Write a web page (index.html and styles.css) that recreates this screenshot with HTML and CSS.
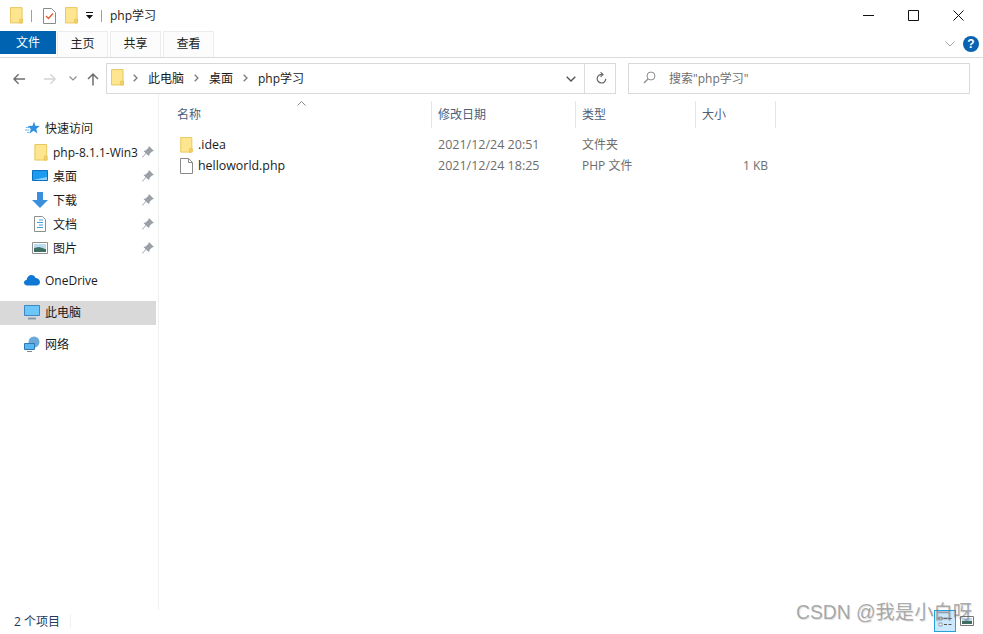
FILE: index.html
```html
<!DOCTYPE html>
<html>
<head>
    <meta charset="utf-8">
    <title>php学习</title>
    <link rel="stylesheet" href="styles.css">
</head>
<body>
    <svg class="defs" width="0" height="0">
        <symbol id="folder" viewBox="0 0 14 18">
            <path d="M.5.5h12.500v16.500H.5z" fill="#fde68f" stroke="#e8c355"/>
            <path d="M10.500 17v-4h3v4z" fill="#f6d365" stroke="#e8c355"/>
        </symbol>
        <symbol id="pin" viewBox="0 0 12 12">
            <path d="M7 0l5 5-2 .6-2.500 2.500-.4 2.100L4.200 7.800.6 11.500 0 11l3.700-3.800-2.200-2.300 2.100-.4L6.200 2z" fill="#9aa0a6"/>
        </symbol>
        <symbol id="crumb" viewBox="0 0 5 8">
            <path d="M.7.7L4 4 .7 7.300" fill="none" stroke="#7a7a7a" stroke-width="1.300"/>
        </symbol>
    </svg>

    <div class="window">
        <!-- title bar -->
        <div class="titlebar">
            <svg class="qa-folder"><use href="#folder"/></svg>
            <span class="qa-sep"></span>
            <svg class="qa-check" viewBox="0 0 13 16">
                <path d="M.5.5h8l4 4v11H.5z" fill="#fff" stroke="#8a8a8a"/>
                <path d="M3 8l2.500 2.500L10 5.500" fill="none" stroke="#e2572b" stroke-width="1.300"/>
            </svg>
            <svg class="qa-folder2"><use href="#folder"/></svg>
            <svg class="qa-drop" viewBox="0 0 8 7">
                <path d="M0 0h7v1H0zM0 3h7L3.500 7z" fill="#111"/>
            </svg>
            <span class="qa-sep sep2"></span>
            <span class="title">php学习</span>
            <div class="winbtns">
                <svg viewBox="0 0 11 11"><path d="M0 5.500h11" stroke="#111" fill="none"/></svg>
                <svg viewBox="0 0 11 11"><path d="M.5.500h10v10H.5z" stroke="#111" fill="none"/></svg>
                <svg viewBox="0 0 11 11"><path d="M.5.500l10 10M10.500.500l-10 10" stroke="#111" fill="none"/></svg>
            </div>
        </div>

        <!-- ribbon tabs -->
        <div class="ribbon">
            <div class="tab tab-file">文件</div>
            <div class="tab">主页</div>
            <div class="tab">共享</div>
            <div class="tab">查看</div>
            <div class="ribbon-right">
                <svg class="chev" viewBox="0 0 10 6"><path d="M.5.500L5 5 9.500.5" fill="none" stroke="#a8a8a8"/></svg>
                <div class="help">?</div>
            </div>
        </div>

        <!-- address row -->
        <div class="addrrow">
            <svg class="navarrow back" viewBox="0 0 14 12"><path d="M13 6H1.500M6 1L1 6l5 5" fill="none" stroke="#6d6d6d" stroke-width="1.500"/></svg>
            <svg class="navarrow fwd" viewBox="0 0 14 12"><path d="M1 6h11.500M8 1l5 5-5 5" fill="none" stroke="#d4d4d4" stroke-width="1.500"/></svg>
            <svg class="navdrop" viewBox="0 0 8 5"><path d="M.5.500L4 4 7.500.5" fill="none" stroke="#8f8f8f" stroke-width="1.200"/></svg>
            <svg class="navarrow up" viewBox="0 0 12 14"><path d="M6 13.500V2M1 7l5-5 5 5" fill="none" stroke="#6d6d6d" stroke-width="1.500"/></svg>
            <div class="addrbox">
                <svg class="addr-folder"><use href="#folder"/></svg>
                <svg class="crumb-arrow"><use href="#crumb"/></svg>
                <span class="crumb">此电脑</span>
                <svg class="crumb-arrow"><use href="#crumb"/></svg>
                <span class="crumb">桌面</span>
                <svg class="crumb-arrow"><use href="#crumb"/></svg>
                <span class="crumb">php学习</span>
                <svg class="addr-drop" viewBox="0 0 10 6"><path d="M.7.700L5 5 9.300.7" fill="none" stroke="#555" stroke-width="1.400"/></svg>
                <span class="addr-sep"></span>
                <svg class="refresh" viewBox="0 0 11 12"><path d="M9.800 6.800A4.300 4.300 0 1 1 6.800 2.600M4.600.4l2.400 2.200-2.400 2.200" fill="none" stroke="#666" stroke-width="1.200"/></svg>
            </div>
            <div class="searchbox">
                <svg class="lens" viewBox="0 0 13 13"><circle cx="8" cy="5" r="4" fill="none" stroke="#8c8c8c"/><path d="M5 8l-4 4" stroke="#8c8c8c" stroke-width="1.200"/></svg>
                <span>搜索"php学习"</span>
            </div>
        </div>

        <div class="body">
            <!-- nav pane -->
            <div class="nav">
                <div class="navrow lvl1 first">
                    <svg class="ico" viewBox="0 0 16 16"><path d="M10 1.500l1.300 4.300 4.500.2-3.600 2.900 1.300 4.600-4-2.700-4 2.700 1.300-4.600L3.800 6l4.700-.2z" fill="#2f8fe0"/><path d="M2 7.500h3.500M1 10h4M3 12.500h2.500" stroke="#6fb6ec"/></svg>
                    <span>快速访问</span>
                </div>
                <div class="navrow lvl2">
                    <svg class="ico folder-ico"><use href="#folder"/></svg>
                    <span class="navtext">php-8.1.1-Win3</span>
                    <svg class="pin"><use href="#pin"/></svg>
                </div>
                <div class="navrow lvl2">
                    <svg class="ico" viewBox="0 0 16 16"><path d="M.5 2.500h15v10H.5z" fill="#1b9bf0" stroke="#0d6fc0"/><path d="M1 12l14-3v3z" fill="#8cd2fa"/></svg>
                    <span class="navtext">桌面</span>
                    <svg class="pin"><use href="#pin"/></svg>
                </div>
                <div class="navrow lvl2">
                    <svg class="ico" viewBox="0 0 16 16"><path d="M5 0h6v8h5l-8 8-8-8h5z" fill="#3b8fdc"/></svg>
                    <span class="navtext">下载</span>
                    <svg class="pin"><use href="#pin"/></svg>
                </div>
                <div class="navrow lvl2">
                    <svg class="ico" viewBox="0 0 16 16"><path d="M2.500.5h8l3 3v12h-11z" fill="#fff" stroke="#8f8f8f"/><path d="M7 4h4M5 6.500h6M7 9h4M5 11.500h6" stroke="#3da0e0"/></svg>
                    <span class="navtext">文档</span>
                    <svg class="pin"><use href="#pin"/></svg>
                </div>
                <div class="navrow lvl2">
                    <svg class="ico" viewBox="0 0 16 16"><path d="M.5 2.500h15v11H.5z" fill="#fff" stroke="#8f8f8f"/><path d="M2 4h12v4H2z" fill="#bcdcf2"/><path d="M2 8l5-1 7 2v3H2z" fill="#3f6f62"/></svg>
                    <span class="navtext">图片</span>
                    <svg class="pin"><use href="#pin"/></svg>
                </div>
                <div class="navrow lvl1 gap">
                    <svg class="ico" viewBox="0 0 16 12"><path d="M3.500 11.500C1 11.500 0 10 0 8.500S1.200 6 2.500 6C3 3 5 1 7.500 1c2 0 3.500 1 4 3 2.500 0 4.500 1.800 4.500 4 0 2-1.500 3.500-3.500 3.500z" fill="#0f78d4"/></svg>
                    <span>OneDrive</span>
                </div>
                <div class="navrow lvl1 gap selected">
                    <svg class="ico" viewBox="0 0 16 16"><path d="M.5 1.500h15v10H.5z" fill="#6cc6f7" stroke="#3a87c6"/><path d="M4 14.500h8" stroke="#8a9aa8" stroke-width="2"/></svg>
                    <span>此电脑</span>
                </div>
                <div class="navrow lvl1 gap">
                    <svg class="ico" viewBox="0 0 16 16"><circle cx="10" cy="6" r="5.500" fill="#6aa9d8"/><path d="M.5 7.500h10v6H.5z" fill="#55b8f2" stroke="#2f78b4"/><path d="M3 15.500h5" stroke="#7a8a98"/></svg>
                    <span>网络</span>
                </div>
            </div>

            <!-- file list -->
            <div class="files">
                <svg class="sort" viewBox="0 0 9 5"><path d="M.5 4.500L4.500.5l4 4" fill="none" stroke="#8a8a8a"/></svg>
                <div class="headrow">
                    <div class="col col-name">名称</div>
                    <div class="col col-date">修改日期</div>
                    <div class="col col-type">类型</div>
                    <div class="col col-size">大小</div>
                </div>
                <div class="filerow first-file">
                    <div class="cell col-name name">
                        <svg class="file-ico"><use href="#folder"/></svg>
                        .idea
                    </div>
                    <div class="cell col-date latin">2021/12/24 20:51</div>
                    <div class="cell col-type">文件夹</div>
                    <div class="cell col-size"></div>
                </div>
                <div class="filerow">
                    <div class="cell col-name name">
                        <svg class="file-ico" viewBox="0 0 13 16"><path d="M.5.500h8l4 4v11H.5z" fill="#fff" stroke="#8a8a8a"/><path d="M8.500.5v4h4" fill="none" stroke="#8a8a8a"/></svg>
                        helloworld.php
                    </div>
                    <div class="cell col-date latin">2021/12/24 18:25</div>
                    <div class="cell col-type">PHP 文件</div>
                    <div class="cell col-size size-val">1 KB</div>
                </div>
            </div>
        </div>

        <!-- status bar -->
        <div class="status">
            <span class="count">2 个项目</span>
            <span class="status-sep"></span>
            <div class="viewbtns">
                <div class="viewbtn active">
                    <svg viewBox="0 0 16 16"><path d="M2 4h3v3H2zM2 10h3v3H2z" fill="#fff" stroke="#777" stroke-width=".7"/><path d="M7 5.500h8M7 11.500h8" stroke="#555" stroke-dasharray="3 1.500"/></svg>
                </div>
                <div class="viewbtn">
                    <svg viewBox="0 0 16 16"><path d="M1.500 3.500h13v9h-13z" fill="#fff" stroke="#777"/><path d="M3 5h10v3H3z" fill="#bcdcf2"/><path d="M3 8h10v3H3z" fill="#3f6f62"/></svg>
                </div>
            </div>
        </div>

        <div class="watermark">CSDN @我是小白呀</div>
    </div>
</body>
</html>
```
FILE: styles.css
```css
* {
    box-sizing: border-box;
}

html,
body {
    margin: 0;
    padding: 0;
    background: #fff;
}

body {
    font-family: "Open Sans", "Noto Sans CJK SC", sans-serif;
    font-size: 12px;
    color: #1a1a1a;
}

.defs {
    position: absolute;
}

.latin {
    font-size: 12.5px;
}

.window {
    position: relative;
    width: 983px;
    height: 634px;
    display: flex;
    flex-direction: column;
    overflow: hidden;
}

/* title bar */
.titlebar {
    height: 31px;
    display: flex;
    align-items: center;
    padding-left: 10px;
    flex: none;
}

.qa-folder,
.qa-folder2 {
    width: 13px;
    height: 17px;
}

.qa-sep {
    width: 1px;
    height: 12px;
    background: #a0a0a0;
    margin: 0 11px 0 8px;
}

.qa-check {
    width: 13px;
    height: 16px;
}

.qa-folder2 {
    margin-left: 9px;
}

.qa-drop {
    width: 8px;
    height: 7px;
    margin-left: 8px;
}

.sep2 {
    margin: 0 8px 0 7px;
}

.title {
    font-size: 12px;
    color: #222;
    padding-bottom: 2px;
}

.winbtns {
    margin-left: auto;
    display: flex;
    gap: 34px;
    padding-right: 19px;
}

.winbtns svg {
    width: 11px;
    height: 11px;
    display: block;
}

/* ribbon */
.ribbon {
    height: 27px;
    flex: none;
    display: flex;
    border-bottom: 1px solid #dadada;
}

.tab {
    width: 51px;
    height: 26px;
    line-height: 24px;
    text-align: center;
    margin-right: 2px;
    background: #fcfcfc;
    border: 1px solid #ececec;
    border-bottom: 0;
    color: #222;
}

.tab-file {
    width: 56px;
    height: 23px;
    line-height: 24px;
    margin-right: 1px;
    background: #0063b1;
    border: 0;
    color: #fff;
}

.ribbon-right {
    margin-left: auto;
    display: flex;
    align-items: center;
    gap: 8px;
    padding-right: 4px;
    height: 26px;
}

.chev {
    width: 10px;
    height: 6px;
}

.help {
    width: 16px;
    height: 16px;
    border-radius: 50%;
    background: #0a62b0;
    color: #fff;
    font: bold 12px/16px "Liberation Sans", sans-serif;
    text-align: center;
}

/* address row */
.addrrow {
    height: 36px;
    flex: none;
    display: flex;
    align-items: center;
    padding-top: 5px;
    padding-left: 13px;
}

.navarrow {
    height: 12px;
    width: 13px;
}

.fwd {
    margin-left: 17px;
}

.navdrop {
    width: 8px;
    height: 5px;
    margin-left: 13px;
}

.up {
    width: 12px;
    height: 14px;
    margin-left: 10px;
}

.addrbox {
    margin-left: 7px;
    width: 510px;
    height: 31px;
    border: 1px solid #d9d9d9;
    display: flex;
    align-items: center;
    padding-left: 4px;
}

.addr-folder {
    width: 13px;
    height: 17px;
    margin-bottom: 2px;
}

.crumb-arrow {
    width: 5px;
    height: 8px;
    margin: 0 10px 2px 9px;
}

.crumb {
    margin-right: 1px;
    padding-bottom: 2px;
}

.addr-drop {
    width: 10px;
    height: 6px;
    margin-left: auto;
}

.addr-sep {
    width: 1px;
    height: 29px;
    background: #dcdcdc;
    margin: 0 11px 0 8px;
}

.refresh {
    width: 11px;
    height: 12px;
    margin: 0 8px 2px 0;
}

.searchbox {
    margin-left: 12px;
    width: 342px;
    height: 31px;
    border: 1px solid #d9d9d9;
    display: flex;
    align-items: center;
    padding-left: 14px;
    padding-bottom: 2px;
    color: #6d6d6d;
}

.lens {
    width: 13px;
    height: 13px;
    margin-right: 13px;
}

/* main area */
.body {
    flex: 1;
    min-height: 0;
    display: flex;
}

.nav {
    width: 159px;
    flex: none;
    border-right: 1px solid #f0f0f0;
    padding-top: 23px;
}

.navrow {
    height: 24px;
    display: flex;
    align-items: center;
    width: 156px;
    padding-bottom: 2px;
}

.lvl1 {
    padding-left: 24px;
}

.lvl2 {
    padding-left: 32px;
}

.gap {
    margin-top: 8px;
}

.ico {
    width: 16px;
    height: 16px;
    margin-right: 5px;
    flex: none;
}

.folder-ico {
    width: 14px;
    height: 17px;
    margin-left: 2px;
    margin-right: 5px;
}

.navtext {
    flex: 1;
    min-width: 0;
    white-space: nowrap;
}

.pin {
    width: 12px;
    height: 12px;
    flex: none;
    margin: 0 2px 0 3px;
}

.selected {
    background: #d9d9d9;
}

/* file list */
.files {
    flex: 1;
    position: relative;
    padding-left: 11px;
}

.sort {
    position: absolute;
    left: 138px;
    top: 7px;
    width: 9px;
    height: 5px;
}

.headrow {
    height: 27px;
    margin-top: 7px;
    display: flex;
    color: #4c607a;
}

.col {
    line-height: 27px;
    padding-left: 6px;
    border-right: 1px solid #e5e5e5;
}

.col.col-name {
    padding-left: 7px;
}

.col-name {
    width: 262px;
}

.col-date {
    width: 144px;
}

.col-type {
    width: 120px;
}

.col-size {
    width: 80px;
}

.filerow {
    display: flex;
    height: 21px;
    line-height: 21px;
    color: #6d6d6d;
}

.first-file {
    margin-top: 6px;
}

.cell {
    padding-left: 6px;
}

.cell.name {
    color: #1a1a1a;
    display: flex;
    align-items: center;
    font-size: 12.4px;
    padding-left: 10px;
}

.file-ico {
    width: 13px;
    height: 16px;
    margin-right: 5px;
}

.size-val {
    text-align: right;
    padding-right: 8px;
}

/* status bar */
.status {
    height: 24px;
    flex: none;
    display: flex;
    align-items: center;
    padding-left: 14px;
    padding-bottom: 2px;
    color: #1f3a5f;
}

.status-sep {
    width: 1px;
    height: 14px;
    background: #f0f0f0;
    margin-left: 10px;
}

.viewbtns {
    margin-left: auto;
    display: flex;
    padding-right: 5px;
}

.viewbtn {
    width: 22px;
    height: 22px;
    display: flex;
    align-items: center;
    justify-content: center;
}

.viewbtn svg {
    width: 16px;
    height: 16px;
}

.viewbtn.active {
    background: #cce8ff;
    border: 1px solid #26a0da;
}

.watermark {
    position: absolute;
    right: 11px;
    bottom: 9px;
    font-family: "Liberation Sans", "Noto Sans CJK SC", sans-serif;
    font-size: 19.3px;
    color: rgba(120, 120, 120, 0.62);
    text-shadow: 1px 1px 1px rgba(0, 0, 0, 0.12);
}
```
